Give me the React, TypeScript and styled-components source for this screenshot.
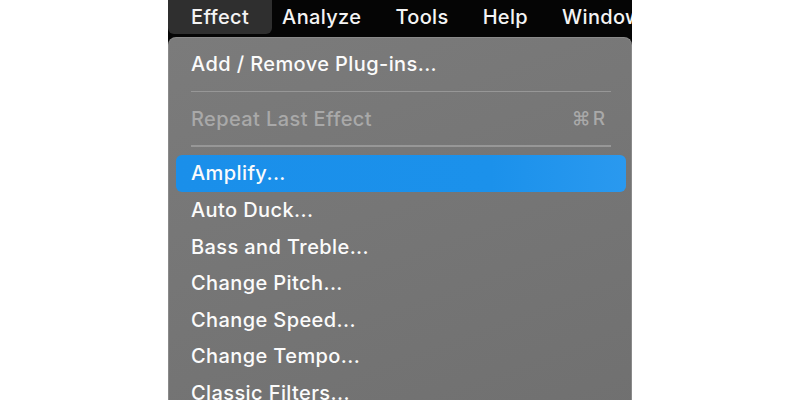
import React from "react";
import styled, { createGlobalStyle } from "styled-components";

const Global = createGlobalStyle`
  html, body { margin: 0; padding: 0; background: #ffffff; }
  body { width: 800px; height: 400px; overflow: hidden; font-family: Inter, "Noto Sans", sans-serif; }
`;

const Page = styled.div`
  display: flex;
  align-items: flex-start;
  padding-left: 168px;
  height: 400px;
  overflow: hidden;
`;

const Column = styled.div`
  width: 464px;
  min-height: 420px;
  display: flex;
  flex-direction: column;
  background: #050505;
`;

const MenuBar = styled.div`
  flex: none;
  height: 36px;
  display: flex;
  align-items: flex-start;
  background: #050505;
  overflow: hidden;
  white-space: nowrap;
`;

const BarItem = styled.div<{ $active?: boolean }>`
  flex: none;
  display: flex;
  align-items: center;
  padding: ${(p) => (p.$active ? "0 23px" : "0 17px")};
  margin-right: ${(p) => (p.$active ? "-7px" : "0")};
  height: 34px;
  background: ${(p) => (p.$active ? "#2f2f2f" : "transparent")};
  border-radius: 0 0 6px 6px;
  color: #f4f4f4;
  font-size: 20px;
  font-weight: 500;
  letter-spacing: 0.35px;
`;

const Panel = styled.div`
  flex: 1;
  margin-top: 1px;
  background: linear-gradient(160deg, #7b7b7b 0%, #767676 45%, #707070 100%);
  border: 1px solid #8a8a8a;
  border-bottom: none;
  border-radius: 8px 8px 0 0;
  padding: 8px 5px 0 7px;
  display: flex;
  flex-direction: column;
`;

const Row = styled.div<{ $selected?: boolean; $disabled?: boolean }>`
  height: 36.6px;
  flex: none;
  display: flex;
  align-items: center;
  justify-content: space-between;
  padding: 0 19px 0 15px;
  border-radius: 6px;
  background: ${(p) =>
    p.$selected ? "linear-gradient(90deg, #1a8fea 0%, #1b91eb 70%, #2a99ef 100%)" : "transparent"};
  color: ${(p) => (p.$disabled ? "#a9a9a9" : "#fbfbfb")};
  font-size: 20px;
  font-weight: 500;
  letter-spacing: 0.4px;
  white-space: nowrap;
`;

const Shortcut = styled.span`
  color: #a9a9a9;
  font-size: 19px;
  font-weight: 500;
  letter-spacing: 2px;
`;

const Separator = styled.div`
  height: 18px;
  flex: none;
  display: flex;
  align-items: center;
  padding: 0 15px;
  &::after {
    content: "";
    flex: 1;
    height: 1.5px;
    background: #979797;
  }
`;

const bar = ["Effect", "Analyze", "Tools", "Help", "Window"];
const items = [
  "Auto Duck...",
  "Bass and Treble...",
  "Change Pitch...",
  "Change Speed...",
  "Change Tempo...",
  "Classic Filters...",
];

export default function App() {
  return (
    <>
      <Global />
      <Page>
        <Column>
          <MenuBar>
            {bar.map((b, i) => (
              <BarItem key={b} $active={i === 0}>
                {b}
              </BarItem>
            ))}
          </MenuBar>
          <Panel>
            <Row>Add / Remove Plug-ins...</Row>
            <Separator />
            <Row $disabled>
              <span>Repeat Last Effect</span>
              <Shortcut>⌘R</Shortcut>
            </Row>
            <Separator />
            <Row $selected>Amplify...</Row>
            {items.map((t) => (
              <Row key={t}>{t}</Row>
            ))}
          </Panel>
        </Column>
      </Page>
    </>
  );
}
